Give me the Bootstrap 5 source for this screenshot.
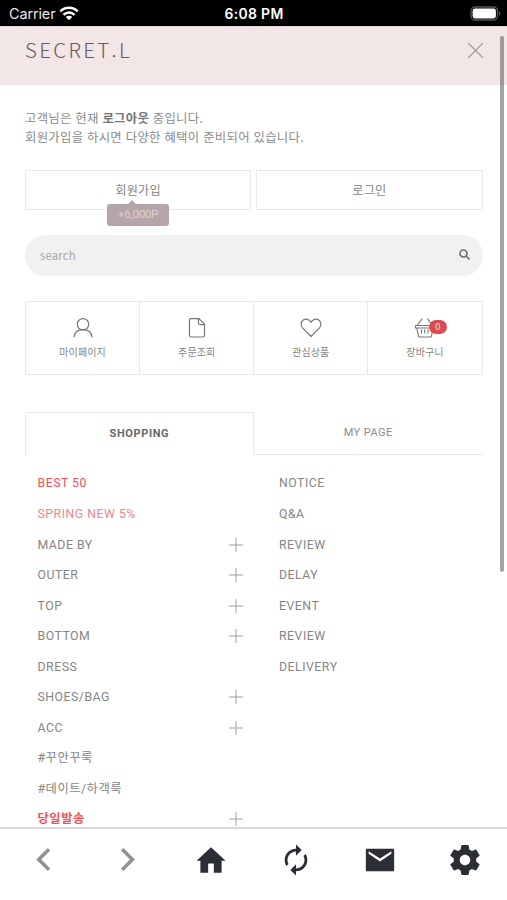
<!DOCTYPE html>
<html lang="ko">
<head>
<meta charset="utf-8">
<meta name="viewport" content="width=device-width, initial-scale=1">
<title>SECRET.L</title>
<link href="https://cdn.jsdelivr.net/npm/bootstrap@5.3.0/dist/css/bootstrap.min.css" rel="stylesheet">
<style>
  body { font-family: Roboto, "Noto Sans CJK KR", sans-serif; font-size: 12px; line-height: 18px; color: #858585; background: #fff; }
  svg { display: block; flex: none; }
  .screen { height: 900px; }
  .status-bar { height: 26px; background: #000; color: #fff; font-family: Inter, sans-serif; font-size: 13.9px; padding: 1px 4px 0 9px; }
  .status-side { flex: 1 1 0; }
  .carrier { font-size: 14.4px; color: #e6e6e6; letter-spacing: -.1px; }
  .clock { font-weight: 600; letter-spacing: .35px; margin-right: 4px; }
  .brand-bar { height: 59px; background: #f2e6e6; padding: 0 24px 11px 25px; border-top: 1px solid #e3d9d9; }
  .brand-name { font-family: "Noto Sans CJK KR", sans-serif; font-weight: 300; font-size: 20.5px; line-height: 30px; letter-spacing: 2.3px; color: #655b5b; margin-top: -4px; }
  .body-area { padding: 24px 24.5px 0 25px; }
  .greeting { font-family: "Noto Sans CJK KR", sans-serif; letter-spacing: .26px; font-size: 12.4px; line-height: 18.6px; color: #8b8b8b; margin-bottom: 24px; }
  .greeting strong { color: #747474; }
  .auth-row { gap: 5px; }
  .auth-btn { height: 40px; border: 1px solid #e9e9e9; border-radius: 0; font-size: 12.2px; letter-spacing: .2px; color: #858585; padding: 0; font-family: "Noto Sans CJK KR", sans-serif; }
  .point-tip { top: 33px; left: 50%; transform: translateX(-50%); width: 62px; height: 22px; line-height: 22px; background: #b5a4a8; border-radius: 3px; color: #eee5e7; font-family: Roboto, sans-serif; font-size: 11.2px; font-weight: 300; letter-spacing: 0; }
  .point-tip::before { content: ""; position: absolute; left: 21px; top: -4px; border: 4px solid transparent; border-top: 0; border-bottom-color: #b5a4a8; }
  .search-pill { height: 41px; margin-top: 25px; border-radius: 21px; background: #f1f1f1; padding: 0 13px 2px 15px; }
  .search-pill input { font-size: 11.3px; letter-spacing: .2px; font-family: "Noto Sans CJK KR", sans-serif; }
  .search-pill input::placeholder { color: #a6a6a6; opacity: 1; }
  .quick-grid { height: 74px; margin-top: 25px; border: 1px solid #e9e9e9; }
  .quick-item { font-size: 10px; letter-spacing: .1px; line-height: 14px; padding-top: 14px; font-family: "Noto Sans CJK KR", sans-serif; color: #858585; }
  .quick-item + .quick-item { border-left: 1px solid #e9e9e9; }
  .quick-item svg { margin-bottom: 6px; }
  .cart-count { left: 15px; top: 4px; width: 18px; height: 14px; padding: 0; border-radius: 7px; background: #dc4c50; color: #f5dfe0; font: 9px/14px Roboto, sans-serif; }
  .menu-tabs { height: 43px; margin-top: 37px; font-size: 11px; letter-spacing: .45px; }
  .tab-on { border: 1px solid #e9e9e9; border-bottom: 0; color: #686868; font-weight: 700; letter-spacing: .6px; }
  .tab-off { border-bottom: 1px solid #e9e9e9; color: #8b8b8b; padding-bottom: 1px; }
  .menu-cols { margin-top: 13px; font-size: 12.3px; letter-spacing: .5px; }
  .menu-left { width: 229px; padding: 0 11px 0 12.5px; }
  .menu-right { padding-left: 25px; }
  .menu-row { height: 30.55px; }
  .is-hot { color: #f5505a; }
  .is-soft { color: #f0868b; }
  .bottom-bar { height: 73px; border-top: 2px solid #dadada; background: #fff; padding-bottom: 9px; color: #2b2f35; }
  .scroll-thumb { right: 3px; top: 36px; width: 4px; height: 536px; border-radius: 2px; background: rgba(100,96,96,.58); }
</style>
<script src="https://cdn.jsdelivr.net/npm/bootstrap@5.3.0/dist/js/bootstrap.bundle.min.js"></script>
</head>
<body>
<svg class="d-none">
  <symbol id="plus" viewBox="0 0 14 14"><path d="M7 0v14M0 7h14" stroke="#a0a0a0" fill="none"/></symbol>
</svg>
<div class="screen d-flex flex-column position-relative overflow-hidden">
  <div class="status-bar d-flex align-items-center flex-shrink-0">
    <div class="status-side d-flex align-items-center">
      <span class="carrier me-1">Carrier</span>
      <svg width="20" height="15" viewBox="0 0 20 15" fill="none" stroke="#fff" stroke-width="2.5"><path d="M1.3 5.4a12.4 12.4 0 0 1 17.4 0M4.5 8.8a7.9 7.9 0 0 1 11 0"/><path d="M10 14.3l-3.2-3.2a4.6 4.6 0 0 1 6.4 0z" fill="#fff" stroke="none"/></svg>
    </div>
    <span class="clock">6:08 PM</span>
    <div class="status-side d-flex justify-content-end">
      <svg width="33" height="15" viewBox="0 0 33 15"><rect x="1" y="1" width="26.5" height="13" rx="4" fill="none" stroke="#555" stroke-width="1.4"/><rect x="2.6" y="2.6" width="23.3" height="9.8" rx="2.4" fill="#fff"/><path d="M29 5.3q2.4 2.2 0 4.4z" fill="#666"/></svg>
    </div>
  </div>

  <header class="brand-bar d-flex align-items-center justify-content-between flex-shrink-0">
    <span class="brand-name">SECRET.L</span>
    <svg width="15" height="15" viewBox="0 0 15 15" stroke="#9a9090" stroke-width="1.1"><path d="M0 0l15 15M15 0L0 15"/></svg>
  </header>

  <main class="body-area flex-grow-1 overflow-hidden">
    <p class="greeting">고객님은 현재 <strong>로그아웃</strong> 중입니다.<br>회원가입을 하시면 다양한 혜택이 준비되어 있습니다.</p>

    <div class="auth-row d-flex">
      <div class="auth-btn btn w-50 position-relative d-flex align-items-center justify-content-center">회원가입<span class="point-tip position-absolute">+6,000P</span></div>
      <div class="auth-btn btn w-50 d-flex align-items-center justify-content-center">로그인</div>
    </div>

    <form class="search-pill d-flex align-items-center">
      <input class="border-0 bg-transparent flex-grow-1 p-0" type="text" placeholder="search" aria-label="search">
      <svg width="11" height="11" viewBox="0 0 11 11" fill="none" stroke="#707070" stroke-width="1.7"><circle cx="4.5" cy="4.5" r="3.5"/><path d="M7 7l3.4 3.4"/></svg>
    </form>

    <div class="quick-grid d-flex">
      <div class="quick-item col d-flex flex-column align-items-center">
        <svg width="22" height="23" viewBox="0 0 22 23" fill="none" stroke="#777" stroke-width="1.2"><circle cx="11" cy="8.3" r="5.7"/><path d="M2 21.3c.5-5 4-7.6 9-7.6s8.5 2.6 9 7.6"/></svg>
        마이페이지
      </div>
      <div class="quick-item col d-flex flex-column align-items-center">
        <svg width="22" height="23" viewBox="0 0 22 23" fill="none" stroke="#777" stroke-width="1.2" stroke-linejoin="round"><path d="M5 2.6h8l5.500 5.500v11.400a1.500 1.500 0 0 1-1.500 1.500H5a1.500 1.500 0 0 1-1.500-1.500V4.100A1.500 1.500 0 0 1 5 2.600zM12.500 2.600v4.500a1.500 1.500 0 0 0 1.500 1.500h4.500"/></svg>
        주문조회
      </div>
      <div class="quick-item col d-flex flex-column align-items-center">
        <svg width="22" height="23" viewBox="0 0 22 23" fill="none" stroke="#777" stroke-width="1.2" stroke-linejoin="round"><path d="M11 20.500L2.700 12.100C.4 9.600.8 6 3 4.200c2.700-2.100 6.500-1 8 2.100 1.500-3.100 5.300-4.200 8-2.100 2.200 1.800 2.600 5.400.3 7.900z"/></svg>
        관심상품
      </div>
      <div class="quick-item col d-flex flex-column align-items-center">
        <div class="position-relative">
          <svg width="22" height="23" viewBox="0 0 22 23" fill="none" stroke="#777" stroke-width="1.1" stroke-linejoin="round"><path d="M1.500 9.500h18v2.500h-18zM2.800 12l2 9h12.400l2-9M3 9.500l5.200-6.800M18.500 9.500l-5.200-6.800M7.500 13.500v4M10.700 13.500v4M14 13.500v4"/></svg>
          <span class="cart-count badge position-absolute">0</span>
        </div>
        장바구니
      </div>
    </div>

    <div class="menu-tabs d-flex">
      <div class="tab-on w-50 d-flex align-items-center justify-content-center">SHOPPING</div>
      <div class="tab-off w-50 d-flex align-items-center justify-content-center">MY PAGE</div>
    </div>

    <div class="menu-cols d-flex">
      <div class="menu-left">
        <div class="menu-row d-flex align-items-center is-hot">BEST 50</div>
        <div class="menu-row d-flex align-items-center is-soft">SPRING NEW 5%</div>
        <div class="menu-row d-flex align-items-center justify-content-between">MADE BY<svg width="14" height="14"><use href="#plus"/></svg></div>
        <div class="menu-row d-flex align-items-center justify-content-between">OUTER<svg width="14" height="14"><use href="#plus"/></svg></div>
        <div class="menu-row d-flex align-items-center justify-content-between">TOP<svg width="14" height="14"><use href="#plus"/></svg></div>
        <div class="menu-row d-flex align-items-center justify-content-between">BOTTOM<svg width="14" height="14"><use href="#plus"/></svg></div>
        <div class="menu-row d-flex align-items-center">DRESS</div>
        <div class="menu-row d-flex align-items-center justify-content-between">SHOES/BAG<svg width="14" height="14"><use href="#plus"/></svg></div>
        <div class="menu-row d-flex align-items-center justify-content-between">ACC<svg width="14" height="14"><use href="#plus"/></svg></div>
        <div class="menu-row d-flex align-items-center">#꾸안꾸룩</div>
        <div class="menu-row d-flex align-items-center">#데이트/하객룩</div>
        <div class="menu-row d-flex align-items-center justify-content-between is-hot"><span class="fw-bold">당일발송</span><svg width="14" height="14"><use href="#plus"/></svg></div>
      </div>
      <div class="menu-right">
        <div class="menu-row d-flex align-items-center">NOTICE</div>
        <div class="menu-row d-flex align-items-center">Q&amp;A</div>
        <div class="menu-row d-flex align-items-center">REVIEW</div>
        <div class="menu-row d-flex align-items-center">DELAY</div>
        <div class="menu-row d-flex align-items-center">EVENT</div>
        <div class="menu-row d-flex align-items-center">REVIEW</div>
        <div class="menu-row d-flex align-items-center">DELIVERY</div>
      </div>
    </div>
  </main>

  <nav class="bottom-bar d-flex align-items-center flex-shrink-0">
    <div class="col d-flex justify-content-center"><svg width="34" height="34" viewBox="0 0 34 34" fill="none" stroke="#929292" stroke-width="3.6"><path d="M24 6.300L13.800 16.500l10.200 10.200"/></svg></div>
    <div class="col d-flex justify-content-center"><svg width="34" height="34" viewBox="0 0 34 34" fill="none" stroke="#929292" stroke-width="3.6"><path d="M12.200 6.300L22.400 16.500 12.200 26.700"/></svg></div>
    <div class="col d-flex justify-content-center"><svg width="34" height="34" viewBox="0 0 24 24" fill="currentColor"><path d="M10 21v-6.500h4V21h5.500v-8.500h2.800L12 3 1.800 12.500h2.700V21z"/></svg></div>
    <div class="col d-flex justify-content-center"><svg width="34" height="34" viewBox="0 0 24 24" fill="currentColor"><path d="M12 6v3l4-4-4-4v3c-4.420 0-8 3.580-8 8 0 1.570.460 3.030 1.240 4.260L6.700 14.800c-.450-.830-.700-1.790-.700-2.800 0-3.310 2.690-6 6-6zm6.760 1.740L17.300 9.200c.440.840.700 1.790.700 2.800 0 3.310-2.690 6-6 6v-3l-4 4 4 4v-3c4.420 0 8-3.580 8-8 0-1.570-.460-3.030-1.240-4.260z"/></svg></div>
    <div class="col d-flex justify-content-center"><svg width="34" height="34" viewBox="0 0 24 24" fill="currentColor"><path d="M21 4H3c-.600 0-1 .400-1 1v14c0 .600.400 1 1 1h18c.600 0 1-.400 1-1V5c0-.600-.400-1-1-1zm-1 3.500l-8 5.500-8-5.500V5.800l8 5.200 8-5.200z"/></svg></div>
    <div class="col d-flex justify-content-center"><svg width="36" height="36" viewBox="0 0 24 24" fill="currentColor"><path d="M19.430 12.980c.040-.320.070-.640.070-.980s-.030-.660-.070-.980l2.110-1.650c.190-.150.240-.420.120-.640l-2-3.460c-.120-.220-.390-.300-.610-.220l-2.490 1c-.520-.400-1.080-.730-1.690-.980l-.380-2.650C14.460 2.180 14.250 2 14 2h-4c-.250 0-.460.180-.490.420l-.380 2.650c-.610.250-1.170.590-1.690.980l-2.490-1c-.230-.090-.490 0-.610.220l-2 3.460c-.130.220-.070.490.120.640l2.110 1.650c-.040.320-.070.650-.070.980s.030.660.070.980l-2.110 1.650c-.190.150-.240.420-.120.640l2 3.460c.120.220.390.300.610.220l2.490-1c.520.400 1.080.730 1.690.980l.380 2.650c.030.240.240.420.490.420h4c.250 0 .460-.180.490-.420l.380-2.650c.610-.250 1.170-.590 1.690-.980l2.490 1c.230.090.490 0 .610-.220l2-3.460c.120-.220.070-.490-.120-.640l-2.110-1.650zM12 15.500c-1.930 0-3.500-1.570-3.500-3.500s1.570-3.500 3.500-3.500 3.500 1.570 3.500 3.500-1.570 3.500-3.500 3.500z"/></svg></div>
  </nav>
  <div class="scroll-thumb position-absolute"></div>
</div>
</body>
</html>
